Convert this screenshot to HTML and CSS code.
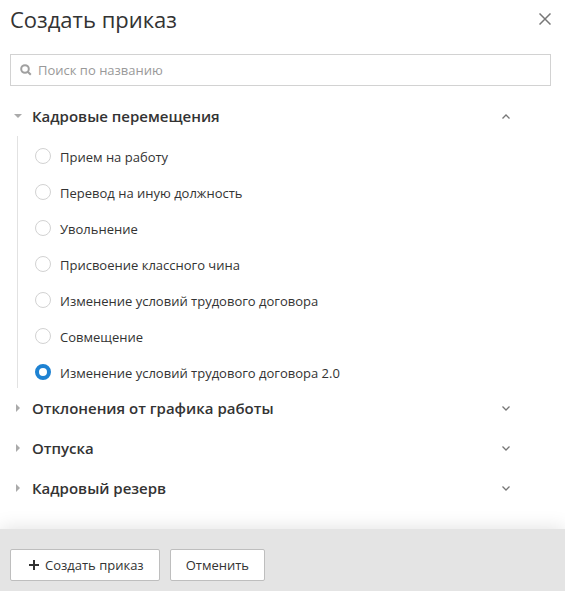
FILE: index.html
```html
<!DOCTYPE html>
<html lang="ru">
<head>
    <meta charset="UTF-8">
    <meta name="viewport" content="width=device-width, initial-scale=1.0">
    <title>Создать приказ</title>
    <link rel="stylesheet" href="styles.css">
</head>
<body>
    <form class="dialog">
        <header class="dialog-header">
            <h1>Создать приказ</h1>
            <button type="button" class="close-btn" aria-label="Закрыть">
                <svg width="12" height="12" viewBox="0 0 12 12"><path d="M.5 .5l11 11M11.5 .5l-11 11"/></svg>
            </button>
        </header>

        <label class="search">
            <svg width="12" height="12" viewBox="0 0 12 12"><circle cx="5" cy="5" r="3.8"/><path d="M7.8 7.8l3 3"/></svg>
            <input type="search" placeholder="Поиск по названию" aria-label="Поиск по названию">
        </label>

        <main class="groups">
            <details open>
                <summary>
                    <span class="marker"></span>
                    <span class="group-title">Кадровые перемещения</span>
                    <svg class="chevron" width="8" height="5" viewBox="0 0 8 5"><path d="M.5 .5L4 4L7.5 .5"/></svg>
                </summary>
                <div class="options">
                    <label class="option"><input type="radio" name="order"><span>Прием на работу</span></label>
                    <label class="option"><input type="radio" name="order"><span>Перевод на иную должность</span></label>
                    <label class="option"><input type="radio" name="order"><span>Увольнение</span></label>
                    <label class="option"><input type="radio" name="order"><span>Присвоение классного чина</span></label>
                    <label class="option"><input type="radio" name="order"><span>Изменение условий трудового договора</span></label>
                    <label class="option"><input type="radio" name="order"><span>Совмещение</span></label>
                    <label class="option"><input type="radio" name="order" checked><span>Изменение условий трудового договора 2.0</span></label>
                </div>
            </details>
            <details>
                <summary>
                    <span class="marker"></span>
                    <span class="group-title">Отклонения от графика работы</span>
                    <svg class="chevron" width="8" height="5" viewBox="0 0 8 5"><path d="M.5 .5L4 4L7.5 .5"/></svg>
                </summary>
            </details>
            <details>
                <summary>
                    <span class="marker"></span>
                    <span class="group-title">Отпуска</span>
                    <svg class="chevron" width="8" height="5" viewBox="0 0 8 5"><path d="M.5 .5L4 4L7.5 .5"/></svg>
                </summary>
            </details>
            <details>
                <summary>
                    <span class="marker"></span>
                    <span class="group-title">Кадровый резерв</span>
                    <svg class="chevron" width="8" height="5" viewBox="0 0 8 5"><path d="M.5 .5L4 4L7.5 .5"/></svg>
                </summary>
            </details>
        </main>

        <footer class="dialog-footer">
            <button type="submit" class="btn">
                <svg width="10" height="10" viewBox="0 0 10 10"><path d="M5 0v10M0 5h10"/></svg>
                Создать приказ
            </button>
            <button type="button" class="btn">Отменить</button>
        </footer>
    </form>
</body>
</html>
```
FILE: styles.css
```css
* {
    margin: 0;
    padding: 0;
    box-sizing: border-box;
}

body {
    font-family: 'Segoe UI', 'Open Sans', 'Noto Sans', sans-serif;
    font-size: 13px;
    line-height: 20px;
    background: #fff;
    color: #333;
}

button,
input {
    font: inherit;
    color: inherit;
}

svg {
    fill: none;
    flex-shrink: 0;
}

.dialog {
    min-height: 100vh;
    display: flex;
    flex-direction: column;
}

.dialog-header {
    display: flex;
    align-items: center;
    justify-content: space-between;
    height: 38px;
    padding: 0 10px;
}

h1 {
    font-size: 22px;
    font-weight: 400;
    line-height: 38px;
}

.close-btn {
    display: flex;
    padding: 4px;
    border: none;
    background: none;
    cursor: pointer;
}

.close-btn svg {
    stroke: #777;
    stroke-width: 1.5;
}

.search {
    display: flex;
    align-items: center;
    gap: 6px;
    height: 32px;
    margin: 16px 14px 10px 10px;
    padding: 0 9px;
    border: 1px solid #d2d2d2;
}

.search svg {
    stroke: #a0a0a0;
    stroke-width: 2;
}

.search input {
    flex: 1;
    border: none;
    outline: none;
    background: none;
}

.search input::placeholder {
    color: #999;
}

.groups {
    flex: 1;
    padding: 0 10px;
}

summary {
    display: flex;
    align-items: center;
    height: 40px;
    padding: 0 45px 0 4px;
    list-style: none;
    cursor: pointer;
}

.marker {
    width: 8px;
    height: 8px;
    margin-right: 10px;
    background: #aaa;
    clip-path: polygon(25% 0, 75% 50%, 25% 100%);
}

details[open] .marker {
    clip-path: polygon(0 25%, 100% 25%, 50% 75%);
}

.group-title {
    flex: 1;
    font-size: 15px;
    font-weight: 600;
}

.chevron {
    stroke: #777;
    stroke-width: 1.3;
}

details[open] .chevron {
    transform: rotate(180deg);
}

.options {
    margin-left: 7px;
    border-left: 1px solid #e2e2e2;
}

.option {
    display: flex;
    align-items: center;
    gap: 9px;
    height: 36px;
    padding: 4px 0 0 17px;
    cursor: pointer;
}

.option span {
    padding-top: 2px;
}

.option input {
    appearance: none;
    width: 16px;
    height: 16px;
    border: 1px solid #d2d2d2;
    border-radius: 50%;
    background: #fff;
}

.option input:checked {
    border: 4px solid #1e82d2;
}

.dialog-footer {
    display: flex;
    gap: 10px;
    padding: 20px 10px 10px;
    background: #e4e4e4;
    box-shadow: 0 0 20px rgba(0, 0, 0, 0.13);
}

.btn {
    display: flex;
    align-items: center;
    gap: 6px;
    height: 32px;
    padding: 0 15px;
    border: 1px solid #bebebe;
    border-radius: 2px;
    background: #fff;
    cursor: pointer;
}

.btn svg {
    margin-left: 3px;
    stroke: #333;
    stroke-width: 2;
}
```
